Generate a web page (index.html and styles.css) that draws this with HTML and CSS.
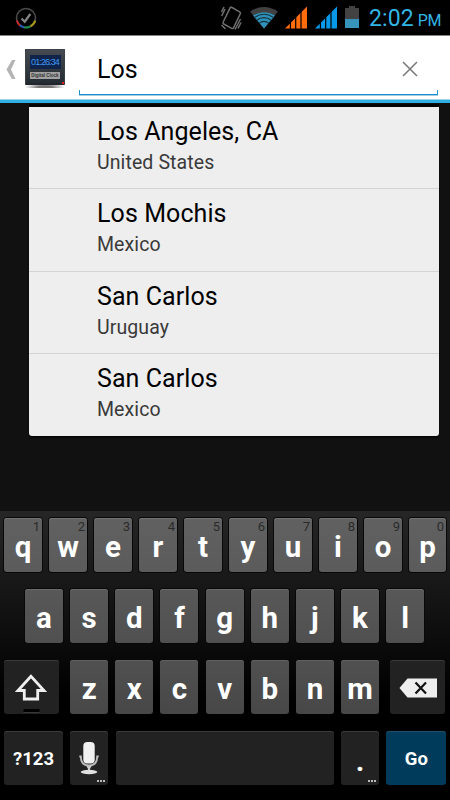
FILE: index.html
```html
<!DOCTYPE html>
<html lang="en">
<head>
<meta charset="utf-8">
<title>City search</title>
<link rel="stylesheet" href="styles.css">
</head>
<body>
<div class="screen">
  <div class="status">
    <svg class="status-check" width="22" height="22" viewBox="0 0 22 22" fill="none">
      <circle cx="11" cy="11" r="9.5" stroke="#4b4b4b" stroke-width="1.6"/>
      <path d="M1.8 13.5A9.5 9.5 0 0 0 5 18.4" stroke="#c22a22" stroke-width="2"/>
      <path d="M5 18.4A9.5 9.5 0 0 0 9 20.3" stroke="#2857b5" stroke-width="2"/>
      <path d="M9 20.3A9.5 9.5 0 0 0 15.5 19.4" stroke="#1f8a4d" stroke-width="2"/>
      <path d="M15.5 19.4A9.5 9.5 0 0 0 20.2 13.5" stroke="#a99a1c" stroke-width="2"/>
      <path d="M6.5 11.5l3.2 3.2L15.3 7" stroke="#858585" stroke-width="2.2"/>
    </svg>
    <svg class="status-icons" width="144" height="26" viewBox="0 0 144 26">
      <g fill="none" stroke="#6f6f6f" stroke-width="1.5">
        <path d="M9 2.200Q9.400.8 10.600 1.300l8 4.500q1.300.7.700 2l-6.800 14q-.6 1.200-1.800.6L2.800 18q-1.300-.7-.6-2z"/>
        <path d="M.7 10L4 3M.5 6L3 1M17 22.500l3-6M14 23.500l5.500-10.500M.5 19l4 4"/>
      </g>
      <path d="M29 5.500Q43-3.500 57 5.500L43 22.500z" fill="#414141"/>
      <path d="M32 9.500Q43 3 54 9.500L43 22.500z" fill="#2f91b8"/>
      <g fill="none" stroke="#15333f" stroke-width="1.100"><path d="M33.500 11.500Q43 5 52.500 11.500M35.700 14.200Q43 9 50.300 14.200M38 17.200Q43 13.500 48 17.200"/></g>
      <path d="M64 22.500L86 .5v22z" fill="#ff6c0b"/>
      <path d="M69.400 1v22M74.700 1v22M80 1v22" stroke="#000" stroke-width="1.200"/>
      <path d="M94 22.500L116 .5v22z" fill="#0799e8"/>
      <path d="M99.400 1v22M104.700 1v22M110 1v22" stroke="#000" stroke-width="1.200"/>
      <path d="M124 2h4V0h6v2h4v11h-14z" fill="#424242"/><path d="M124 13h14v9h-14z" fill="#3793ba"/>
    </svg>
    <div class="time"><span>2:02</span><span class="meridiem">PM</span></div>
  </div>
  <div class="header">
    <svg class="back" width="10" height="22" viewBox="0 0 10 22"><path d="M6 1h3.500L5 10.500 9.500 20H6L.5 10.500z" fill="#b4b4b4"/></svg>
    <div class="app">
      <div class="app-face">
        <span class="app-time">01:26:34</span>
        <span class="app-name">Digital Clock</span>
      </div>
    </div>
    <div class="search">
      <span class="query">Los</span>
      <svg class="clear" width="16" height="16" viewBox="0 0 16 16"><path d="M1 1l14 14M15 1L1 15" stroke="#777" stroke-width="1.500"/></svg>
    </div>
  </div>
  <div class="results">
    <div class="result"><div class="city">Los Angeles, CA</div><div class="country">United States</div></div>
    <div class="result"><div class="city">Los Mochis</div><div class="country">Mexico</div></div>
    <div class="result"><div class="city">San Carlos</div><div class="country">Uruguay</div></div>
    <div class="result"><div class="city">San Carlos</div><div class="country">Mexico</div></div>
  </div>
  <div class="keyboard">
    <div class="keys row-top">
      <div class="key">q<span class="hint">1</span></div><div class="key">w<span class="hint">2</span></div><div class="key">e<span class="hint">3</span></div><div class="key">r<span class="hint">4</span></div><div class="key">t<span class="hint">5</span></div><div class="key">y<span class="hint">6</span></div><div class="key">u<span class="hint">7</span></div><div class="key">i<span class="hint">8</span></div><div class="key">o<span class="hint">9</span></div><div class="key">p<span class="hint">0</span></div>
    </div>
    <div class="keys row-home">
      <div class="key">a</div><div class="key">s</div><div class="key">d</div><div class="key">f</div><div class="key">g</div><div class="key">h</div><div class="key">j</div><div class="key">k</div><div class="key">l</div>
    </div>
    <div class="keys row-low">
      <div class="key dark shift">
        <svg width="34" height="40" viewBox="0 0 34 40"><path d="M16 3.300L3 17.500h6.300V26h13.400v-8.500H29z" fill="none" stroke="#efefef" stroke-width="2.800"/><path d="M8.500 36h16v3h-16z" fill="#000"/><path d="M8.500 39.500h16" stroke="#383838"/></svg>
      </div>
      <div class="key">z</div><div class="key">x</div><div class="key">c</div><div class="key">v</div><div class="key">b</div><div class="key">n</div><div class="key">m</div>
      <div class="key dark delete">
        <svg width="38" height="20" viewBox="0 0 38 20"><path d="M.5 10l8-9.500H38v19H8.500z" fill="#eee"/><path d="M16.500 4.500l10.500 11M27 4.500L16.500 15.500" stroke="#111" stroke-width="2.200"/></svg>
      </div>
    </div>
    <div class="keys row-bottom">
      <div class="key dark label">?123</div>
      <div class="key dark mic">
        <svg width="22" height="34" viewBox="0 0 22 34"><rect x="5.300" y="1" width="11.400" height="21.500" rx="4" fill="#f0f0f0"/><path d="M1.300 15.500h1.500c0 5 2 9 8.200 9s8.200-4 8.200-9h1.500" fill="none" stroke="#bcbcbc" stroke-width="1.900"/><path d="M8.500 25h5L12 28v2h-2v-2z" fill="#ccc"/><ellipse cx="11" cy="31" rx="8.300" ry="2.200" fill="#e0e0e0"/></svg>
        <span class="more"></span>
      </div>
      <div class="key dark"></div>
      <div class="key dark period">.<span class="more"></span></div>
      <div class="key go label">Go</div>
    </div>
  </div>
</div>
</body>
</html>
```
FILE: styles.css
```css
* { box-sizing: border-box; }
body { margin: 0; background: #000; font-family: Roboto, sans-serif; }
.screen { width: 450px; height: 800px; display: flex; flex-direction: column; background: #111; overflow: hidden; }
.status { height: 36px; flex: none; display: flex; background: #000; border-bottom: 1px solid #858585; padding-left: 15px; }
.status-check { margin-top: 7px; }
.status-icons { margin: 6px 0 0 184px; }
.time { display: flex; align-items: baseline; gap: 4px; margin-left: 4px; color: #33b5e5; font-size: 23px; line-height: 38px; white-space: nowrap; letter-spacing: .1px; }
.meridiem { font-size: 16px; letter-spacing: -.3px; }
.header { height: 67px; flex: none; display: flex; background: #fff; border-bottom: 3px solid #2eb1e2; box-shadow: inset 0 -1px #9fd3ea; }
.back { margin: 23px 0 0 6px; }
.app { margin: 13px 0 0 9px; width: 40px; height: 39px; padding-bottom: 3px; background: radial-gradient(ellipse at 50% 94%, #777 25%, #fff 70%) bottom / 100% 6px no-repeat; }
.app-face { position: relative; height: 36px; display: flex; flex-direction: column; align-items: center; padding-top: 5px; border: 1px solid #3c4247; border-bottom: 2px solid #20262c; border-radius: 1px; background: linear-gradient(#454b50, #242c33); }
.app-face::after { content: ""; position: absolute; right: 0; bottom: -1px; width: 2px; height: 2px; background: #e02020; }
.app-time { width: 31px; height: 14px; background: #10234a; color: #3d9af0; font: 9px/14px "Liberation Sans", sans-serif; letter-spacing: -.9px; text-align: center; white-space: nowrap; }
.app-name { width: 30px; height: 7px; margin-top: 3px; background: #a2a2a2; color: #333; font: bold 4.5px/7px "Liberation Sans", sans-serif; text-align: center; white-space: nowrap; }
.search { width: 359.4px; height: 59px; margin-left: 14px; display: flex; align-items: flex-start; background: linear-gradient(#1d95c9, #1d95c9) left bottom / 1px 4px no-repeat, linear-gradient(#1d95c9, #1d95c9) right bottom / 1px 4px no-repeat; border-bottom: 1px solid #1093cf; box-shadow: 0 1px #a9cbe2; }
.query { margin: 19px auto 0 18px; color: #000; font-size: 25px; line-height: 30px; }
.clear { margin: 25px 20px 0 0; }
.results { width: 410px; height: 329px; flex: none; margin: 4px 0 0 29px; background: #eee; display: grid; grid-template-rows: repeat(4, 1fr); border-radius: 0 0 3px 3px; box-shadow: 0 -3px #050505, 0 1px 2px #000; }
.result { padding: 10px 0 0 68px; border-bottom: 1px solid #d4d4d4; }
.result:last-child { border-bottom: 0; }
.city { font-size: 25px; line-height: 30px; letter-spacing: .08px; color: #000; }
.country { font-size: 19.5px; line-height: 24px; margin-top: 4px; letter-spacing: .1px; color: #3a3a3a; }
.keyboard { height: 289px; margin-top: auto; flex: none; padding: 7px 3px 0 4px; background: linear-gradient(#262626, #000 65%); display: flex; flex-direction: column; gap: 17px; }
.keys { height: 54px; display: grid; grid-template-rows: 54px; column-gap: 7px; justify-content: start; }
.row-top { grid-template-columns: repeat(9, 38px) 37px; }
.row-home { grid-template-columns: repeat(9, 38px); column-gap: 7.150px; margin-left: 21px; }
.row-low { grid-template-columns: 59px repeat(7, 38px) 59px; column-gap: 7.170px; }
.shift { margin-right: 4px; }
.delete { margin-left: 4px; }
.row-bottom { grid-template-columns: 59px 38px 218px 38px 60px; column-gap: 7.350px; }
.key { position: relative; display: flex; justify-content: center; border-radius: 3px; color: #fff; font-weight: 700; font-size: 29.5px; line-height: 58px; background: linear-gradient(#616161, #5b5b5b); box-shadow: inset 0 1px #737373, 0 0 0 1px #080808; }
.row-home .key { background: linear-gradient(#585858, #505050); box-shadow: inset 0 1px #6b6b6b, 0 0 0 1px #080808; }
.row-low .key { background: linear-gradient(#515151, #474747); box-shadow: inset 0 1px #606060; }
.keys .key.dark { background: #222; box-shadow: inset 0 1px #3b3b3b; }
.keys .key.go { background: #003b5c; box-shadow: inset 0 1px #1d4f6c; }
.key.label { font-size: 18.5px; line-height: 57px; }
.period { line-height: 60px; }
.hint { position: absolute; right: 2px; top: 1px; font-size: 13px; line-height: 15px; font-weight: 400; color: #2a2a2a; }
.shift svg { margin-top: 13px; }
.delete svg { margin-top: 18px; }
.mic svg { margin-top: 10px; }
.more { position: absolute; right: 3px; bottom: 3px; width: 8px; height: 2px; background: repeating-linear-gradient(90deg, #bbb 0 2px, transparent 2px 3px); }
```
